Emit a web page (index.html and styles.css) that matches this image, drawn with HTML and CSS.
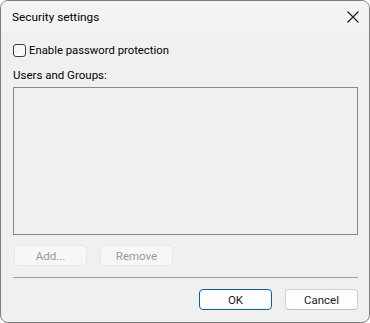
FILE: index.html
```html
<!DOCTYPE html>
<html>
<head>
<meta charset="utf-8">
<link rel="stylesheet" href="styles.css">
</head>
<body>
<div class="window">
  <div class="titlebar">
    <span class="title">Security settings</span>
    <svg class="close" width="12" height="12" viewBox="0 0 12 12"><path d="M0.5 0.5 L11.5 11.5 M11.5 0.5 L0.5 11.5" stroke="#1a1a1a" stroke-width="1.1" fill="none"/></svg>
  </div>
  <div class="content">
    <label class="check-row">
      <span class="checkbox"></span>
      <span class="check-label">Enable password protection</span>
    </label>
    <div class="group-label">Users and Groups:</div>
    <div class="listbox"></div>
    <div class="list-buttons">
      <button class="btn disabled">Add...</button>
      <button class="btn disabled">Remove</button>
    </div>
    <div class="separator"></div>
    <div class="dialog-buttons">
      <button class="btn primary">OK</button>
      <button class="btn">Cancel</button>
    </div>
  </div>
</div>
</body>
</html>
```
FILE: styles.css
```css
* { box-sizing: border-box; }
html, body { margin: 0; padding: 0; background: #ffffff; }
body {
  font-family: "Segoe UI", Roboto, "Noto Sans", sans-serif;
  font-size: 11.5px;
  color: #000;
}
.window {
  width: 370px;
  height: 323px;
  border: 1px solid #7d7d7d;
  border-radius: 8px;
  background: #f0f0f0;
  overflow: hidden;
  display: flex;
  flex-direction: column;
}
.titlebar {
  height: 31px;
  flex: none;
  background: #f3f3f3;
  display: flex;
  align-items: center;
  justify-content: space-between;
  padding: 0 10px 0 11px;
}
.title { font-size: 11.8px; color: #000; }
.close { display: block; }
.content {
  padding: 11px 11px 0 12px;
  display: flex;
  flex-direction: column;
}
.check-row {
  display: flex;
  align-items: center;
  height: 15px;
}
.checkbox {
  width: 13px;
  height: 13px;
  border: 1px solid #3b3b3b;
  border-radius: 3px;
  background: #f7f7f7;
  margin-right: 3px;
}
.check-label { font-size: 11.3px; }
.group-label {
  margin-top: 9px;
  height: 16px;
  line-height: 16px;
}
.listbox {
  margin-top: 4px;
  height: 148px;
  border: 1px solid #868a8f;
  background: #f0f0f0;
}
.list-buttons {
  margin-top: 10px;
  display: flex;
  gap: 13px;
  padding-left: 1px;
}
.btn {
  width: 73px;
  height: 21px;
  font-family: "Segoe UI", Roboto, "Noto Sans", sans-serif;
  font-size: 11.5px;
  padding: 0;
  border: 1px solid #d0d0d0;
  border-bottom-color: #bcbcbc;
  border-radius: 4px;
  background: #fdfdfd;
  color: #1a1a1a;
  line-height: 18px;
}
.btn.disabled {
  background: #f7f7f7;
  border-color: #e6e6e6;
  color: #9a9a9a;
}
.btn.primary {
  border: 1px solid #005fb8;
  background: #fefefe;
}
.separator {
  margin-top: 11px;
  height: 1px;
  background: #a0a0a0;
}
.dialog-buttons {
  margin-top: 11px;
  display: flex;
  justify-content: flex-end;
  gap: 13px;
}
```
